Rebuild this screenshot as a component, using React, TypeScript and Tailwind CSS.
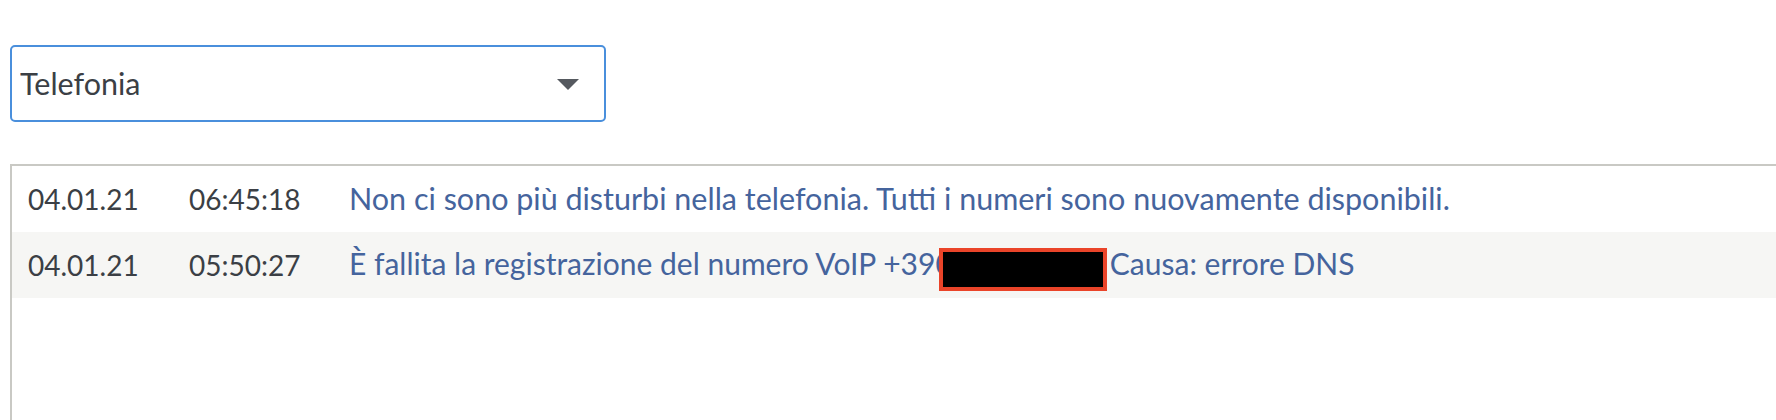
import { useState } from "react";

/* =========================
   TYPES
========================= */
type LogEntry = {
  date: string;
  time: string;
  message: React.ReactNode;
};

const CATEGORIES = ["Telefonia", "Internet", "Sistema", "Wi-Fi"];

/* redacted phone number block (sits over the digits) */
function Redacted() {
  return (
    <span className="relative top-[2px] inline-block align-middle w-[168px] h-[43px] -ml-[14px] mr-[3px] border-[4px] border-[#ea4429] bg-black box-border" />
  );
}

const ENTRIES: LogEntry[] = [
  {
    date: "04.01.21",
    time: "06:45:18",
    message:
      "Non ci sono più disturbi nella telefonia. Tutti i numeri sono nuovamente disponibili.",
  },
  {
    date: "04.01.21",
    time: "05:50:27",
    message: (
      <span className="text-[30px]">
        È fallita la registrazione del numero VoIP +390
        <Redacted />
        Causa: errore DNS
      </span>
    ),
  },
];

/* =========================
   EVENT LOG
========================= */
export default function App() {
  const [category, setCategory] = useState("Telefonia");

  return (
    <div
      className="w-[1776px] h-[420px] overflow-hidden bg-white pt-[45px] pl-[10px]"
      style={{ fontFamily: '"Lato", "Noto Sans", sans-serif' }}
    >
      {/* FILTER */}
      <div className="relative w-[596px] h-[77px]">
        <select
          value={category}
          onChange={(e) => setCategory(e.target.value)}
          className="appearance-none w-full h-full rounded-[5px] border-2 border-[#4a8fdc] bg-white pl-[8px] text-[30.5px] text-[#3b3f45] outline-none"
        >
          {CATEGORIES.map((c) => (
            <option key={c}>{c}</option>
          ))}
        </select>
        <svg
          className="absolute right-[27px] top-[34px] pointer-events-none"
          width="22"
          height="11"
          viewBox="0 0 22 11"
        >
          <polygon points="0,0 22,0 11,11" fill="#55595f" />
        </svg>
      </div>

      {/* LOG TABLE */}
      <div className="mt-[42px] border-t-2 border-l-2 border-[#c9c9c4] h-[260px]">
        {ENTRIES.map((e, i) => (
          <div
            key={i}
            className={`flex items-center h-[66px] text-[28px] ${
              i % 2 === 1 ? "bg-[#f6f6f4]" : "bg-white"
            }`}
          >
            <div className="w-[177px] pl-[16px] text-[#3b3f45]">{e.date}</div>
            <div className="w-[160px] text-[#3b3f45]">{e.time}</div>
            <div className="text-[30.5px] text-[#45649d] whitespace-nowrap">
              {e.message}
            </div>
          </div>
        ))}
      </div>
    </div>
  );
}
